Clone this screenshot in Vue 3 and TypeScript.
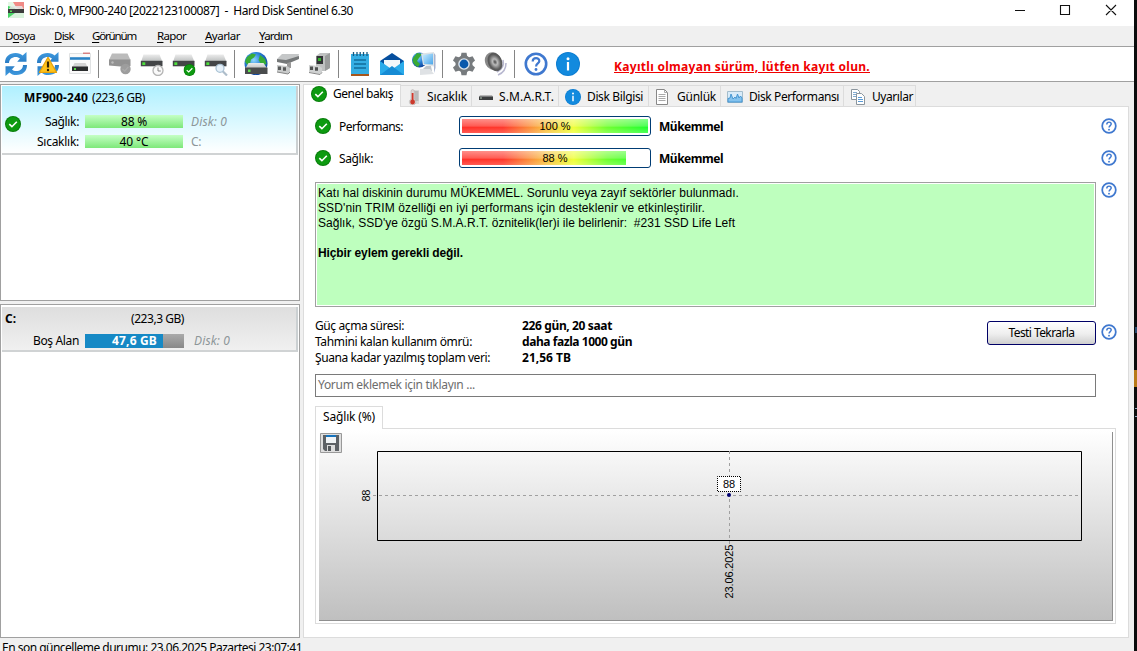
<script setup lang="ts">
import type { Directive } from 'vue'

// Tracks a label so that it occupies the given width in pixels.
const vFit: Directive<HTMLElement, number> = {
  mounted(el, binding) {
    const count = (el.textContent ?? '').length
    const natural = el.getBoundingClientRect().width
    el.style.letterSpacing = `${(binding.value - natural) / count}px`
  },
}

interface Menu { key: string; pre: string; rest: string; left: number; width: number }
const menus: Menu[] = [
  { pre: 'D', key: 'o', rest: 'sya', left: 5, width: 30 },
  { pre: '', key: 'D', rest: 'isk', left: 54, width: 20 },
  { pre: '', key: 'G', rest: 'örünüm', left: 92, width: 44 },
  { pre: '', key: 'R', rest: 'apor', left: 157, width: 29 },
  { pre: '', key: 'A', rest: 'yarlar', left: 205, width: 35 },
  { pre: '', key: 'Y', rest: 'ardım', left: 259, width: 33 },
]

const toolbar: string[] = [
  'refresh', 'refresh-warn', 'window', '|', 'disk-off', 'disk-clock', 'disk-ok', 'disk-search', '|',
  'disk-globe', 'plug', 'plug-disk', '|', 'notes', 'mail', 'network', '|', 'gear', 'speaker', '|', 'help', 'info',
]

interface Tab { label: string; icon: string; box: number; pad: number; gap: number; width: number }
const tabs: Tab[] = [
  { label: 'Genel bakış', icon: 'check', box: 98, pad: 7, gap: 6, width: 60 },
  { label: 'Sıcaklık', icon: 'thermo', box: 71, pad: 4, gap: 6, width: 40 },
  { label: 'S.M.A.R.T.', icon: 'drive', box: 87, pad: 6, gap: 5, width: 55 },
  { label: 'Disk Bilgisi', icon: 'info', box: 90, pad: 6, gap: 6, width: 56 },
  { label: 'Günlük', icon: 'page', box: 72, pad: 6, gap: 6, width: 39 },
  { label: 'Disk Performansı', icon: 'wave', box: 123, pad: 6, gap: 6, width: 90 },
  { label: 'Uyarılar', icon: 'pages', box: 72, pad: 6, gap: 6, width: 41 },
]

const meters = [
  { label: 'Performans:', labelWidth: 64, value: 100 },
  { label: 'Sağlık:', labelWidth: 34, value: 88 },
]

const facts = [
  { label: 'Güç açma süresi:', lw: 89, value: '226 gün, 20 saat', vw: 90 },
  { label: 'Tahmini kalan kullanım ömrü:', lw: 157, value: 'daha fazla 1000 gün', vw: 110 },
  { label: 'Şuana kadar yazılmış toplam veri:', lw: 175, value: '21,56 TB', vw: 49 },
]
</script>

<template>
  <svg class="defs" width="0" height="0">
    <defs>
      <linearGradient id="blue" x1="0" y1="0" x2="0" y2="1"><stop offset="0" stop-color="#3f9be0" /><stop offset="1" stop-color="#2a7cc4" /></linearGradient>
      <linearGradient id="metal" x1="0" y1="0" x2="0" y2="1"><stop offset="0" stop-color="#ececec" /><stop offset="1" stop-color="#b9bcbc" /></linearGradient>
      <radialGradient id="globe" cx=".4" cy=".35" r=".7"><stop offset="0" stop-color="#8fd8ff" /><stop offset=".5" stop-color="#267fd4" /><stop offset="1" stop-color="#0c3c94" /></radialGradient>
      <linearGradient id="screen" x1="0" y1="0" x2="1" y2="1"><stop offset="0" stop-color="#cdeeff" /><stop offset="1" stop-color="#4aa6ea" /></linearGradient>
      <radialGradient id="cone"><stop offset="0" stop-color="#4a4a4a" /><stop offset=".35" stop-color="#bbb" /><stop offset=".8" stop-color="#666" /><stop offset="1" stop-color="#505050" /></radialGradient>
    </defs>
    <symbol id="i-check" viewBox="0 0 16 16"><circle cx="8" cy="8" r="8" fill="#087d0b" /><circle cx="8" cy="8" r="7" fill="#0d9a10" /><path d="M4.3 8.2l2.6 2.5 4.9-5" fill="none" stroke="#fff" stroke-width="1.6" /></symbol>
    <symbol id="i-info" viewBox="0 0 24 24"><circle cx="12" cy="12" r="12" fill="#0c7cd0" /><circle cx="12" cy="12" r="11" fill="#128ade" /><circle cx="12" cy="6.8" r="1.5" fill="#fff" /><path d="M12 10v8.500" stroke="#fff" stroke-width="2.2" /></symbol>
    <symbol id="i-help" viewBox="0 0 24 24"><circle cx="12" cy="12" r="10.2" fill="#fff" stroke="#3f78cf" stroke-width="2.600" /><path d="M8.7 9.6c0-4.6 6.8-4.3 6.6-.5-.1 2.4-3.2 2.4-3.2 5.3" fill="none" stroke="#3f78cf" stroke-width="2.2" /><circle cx="12" cy="17.5" r="1.4" fill="#3f78cf" /></symbol>
    <symbol id="i-refresh" viewBox="0 0 24 24"><g id="arrow"><path d="M1 11C1 4.700 5.200 1 11.600 1c3.200 0 5.300 1 7 2.600L22.500 0v9.800h-9.300L16 6.500C14.900 5.400 13.500 4.900 11.700 4.900 8 4.900 5.200 7 5 11z" fill="url(#blue)" /></g><use href="#arrow" transform="rotate(180 12 12)" /></symbol>
    <symbol id="i-refresh-warn" viewBox="0 0 24 24"><use href="#i-refresh" width="24" height="24" /><path d="M12 5.300L20.500 20.400h-17z" fill="#ffc31c" stroke="#e5a20b" stroke-width="1.200" stroke-linejoin="round" /><path d="M12 9.500v6" stroke="#332504" stroke-width="2.200" /><circle cx="12" cy="18" r="1.200" fill="#332504" /></symbol>
    <symbol id="i-window" viewBox="0 0 24 24"><path d="M1.500 1.500h21v20h-21z" fill="#fafafa" stroke="#e0e2e3" /><path d="M15 1.200h7" stroke="#d36a6a" stroke-width="1.200" /><path d="M2 6.500h20" stroke="#2b83c6" stroke-width="2.600" /><path d="M6.500 11h11l2 4h-15z" fill="#d4d4d4" /><path d="M4 14.500h16v4.500H4z" fill="#2b2d2e" /><path d="M6 16h2v2H6z" fill="#55d84a" /></symbol>
    <symbol id="disk" viewBox="0 0 24 24"><path d="M3.500 2.500h16L22.500 10H1z" fill="url(#metal)" /><path d="M.8 8.800h21.700v5.500H.8z" fill="#434547" /><path d="M2.300 10.300h3v2.700h-3z" fill="#4ddf3c" /></symbol>
    <symbol id="i-disk-off" viewBox="0 0 24 24"><path d="M4 1.500h15.500L22.500 8H1z" fill="#bbb" /><path d="M1 7.500h21.500V14L18 15 1 13.500z" fill="#929292" /><circle cx="17.500" cy="17" r="5.200" fill="#9d9d9d" /><circle cx="4.500" cy="10.500" r="1.200" fill="#bbb" /><path d="M14.500 17l2.300 2 3.500-4" fill="none" stroke="#aaa" stroke-width="1.300" /></symbol>
    <symbol id="i-disk-clock" viewBox="0 0 24 24"><use href="#disk" width="24" height="24" /><circle cx="18" cy="18.500" r="5" fill="#fafafa" stroke="#b4b4b4" stroke-width="1.300" /><path d="M18 15.500v3.500h2.800" fill="none" stroke="#888" /></symbol>
    <symbol id="i-disk-ok" viewBox="0 0 24 24"><use href="#disk" width="24" height="24" /><use href="#i-check" x="11.500" y="12" width="12" height="12" /></symbol>
    <symbol id="i-disk-search" viewBox="0 0 24 24"><use href="#disk" width="24" height="24" /><path d="M18 18.500l5 5" stroke="#aebdca" stroke-width="2.200" /><circle cx="16" cy="16.300" r="4" fill="#e6f1fa" stroke="#aac2d4" stroke-width="1.300" /></symbol>
    <symbol id="i-disk-globe" viewBox="0 0 24 24"><circle cx="12" cy="11.500" r="11.500" fill="url(#globe)" /><path d="M3 5l5-3.500 4 1-2 3-3 2-1 4-3 1-2-3zm13-2l5 4 1.500 5-3 1-3-2-2-3z" fill="#39ad36" /><path d="M4.500 11h15l4 6H1z" fill="url(#metal)" /><path d="M1 15.500h22.500V22H1z" fill="#4a4c4d" /><path d="M4 17.500h2.500v2.500H4z" fill="#61e050" /></symbol>
    <symbol id="i-plug" viewBox="0 0 24 24"><path d="M1 7l5-5h17l-1 5-12 4z" fill="#c5c7c8" /><path d="M1 7l9 1 13-4v3l-12 5-10-2z" fill="#757879" /><path d="M11 11l4-1v6h-4z" fill="#999" /><path d="M1 13l10 1 3 2v5l-3 1-10-2z" fill="#c8caca" /><path d="M2 14.500h3v3.500H2zm5 .7h3v3.500H7z" fill="#585a5a" /><path d="M1 20l11 2 2-2" fill="none" stroke="#888" /></symbol>
    <symbol id="i-plug-disk" viewBox="0 0 24 24"><path d="M8 4l4-3h10v15l-5 3H8z" fill="#bfc1c1" /><path d="M17 4l5-3v15l-5 3z" fill="#9a9c9c" /><path d="M8.500 4H15v8H8.500z" fill="#323536" /><path d="M10 6h3v3h-3z" fill="#35b32e" /><path d="M1 13l10 1 3 2v5l-3 1-10-2z" fill="#cfd1d1" /><path d="M2 14.500h3v3.500H2zm5 .7h3v3.500H7z" fill="#505252" /><path d="M1 20.500l11 2 2-2" fill="none" stroke="#888" /></symbol>
    <symbol id="i-notes" viewBox="0 0 24 24"><path d="M3 2h18v20H3z" fill="#35aee4" /><path d="M3 22h18v2H3z" fill="#a7561c" /><path d="M5.500 0v4M9 0v4m3.200-4v4M15.500 0v4M19 0v4" stroke="#17597f" stroke-width="1.300" /><path d="M6 8h12M6 12h12M6 16h12" stroke="#126d9c" stroke-width="1.600" /></symbol>
    <symbol id="i-mail" viewBox="0 0 24 24"><path d="M0 9L12 1l12 8v5H0z" fill="#064f9e" /><path d="M4 8h16v10H4z" fill="#f3f7fa" /><path d="M0 9l12 8.500L24 9v14H0z" fill="#2aabea" /><path d="M0 23l12-9 12 9z" fill="#168bd4" /></symbol>
    <symbol id="i-network" viewBox="0 0 24 24"><circle cx="7.500" cy="8" r="7.500" fill="url(#globe)" /><path d="M1 6l4-5 5 1-3 4-2 3 3 3-2 3C2 13 0 10 1 6z" fill="#3aaa34" /><path d="M9 1.500L22 0v14.500L11 13z" fill="#dfe3e6" /><path d="M10.500 3L21 1.500v11L12 12z" fill="url(#screen)" /><path d="M14 14h5l1 5H9z" fill="#bfc5cb" /><path d="M8 17h10l4 5-14 1z" fill="#dfe2e5" /><path d="M22 1l1.500 2v13L22 21z" fill="#a8b4d0" /></symbol>
    <symbol id="i-gear" viewBox="0 0 24 24"><circle cx="12" cy="12" r="8.500" fill="#777b7e" /><g fill="#777b7e"><path id="tooth" d="M9.500 0.700h5l1 5H8.500z" /><use href="#tooth" transform="rotate(60 12 12)" /><use href="#tooth" transform="rotate(120 12 12)" /><use href="#tooth" transform="rotate(180 12 12)" /><use href="#tooth" transform="rotate(240 12 12)" /><use href="#tooth" transform="rotate(300 12 12)" /></g><circle cx="12" cy="12" r="5.800" fill="#dbe4ed" /><circle cx="12" cy="12" r="4.400" fill="#0a59ac" /></symbol>
    <symbol id="i-speaker" viewBox="0 0 24 24"><path d="M19 8q2 8-6 12m9-9q0 9-8 12" fill="none" stroke="#b8b8d0" stroke-width="1.600" /><ellipse cx="9" cy="9" rx="8" ry="9" transform="rotate(-25 9 9)" fill="#888" /><ellipse cx="11" cy="10" rx="6.500" ry="9" transform="rotate(-25 11 10)" fill="url(#cone)" stroke="#5a5a5a" /></symbol>
    <symbol id="i-thermo" viewBox="0 0 16 16"><path d="M9 1h5v14H9z" fill="#dadada" /><path d="M9.500 3h4m-4 2h4m-4 2h4m-4 2h4m-4 2h4" stroke="#8c8c8c" stroke-width=".8" /><path d="M6 1.500q1.700-2 3.300 0V10a3.300 3.300 0 1 1-3.300 0z" fill="#dfd5d3" stroke="#aaa" stroke-width=".5" /><path d="M7.600 4v9" stroke="#d2362a" stroke-width="1.800" /><circle cx="7.600" cy="13" r="2.400" fill="#cb392c" /></symbol>
    <symbol id="i-drive" viewBox="0 0 16 16"><path d="M2 6h12l1 2H1z" fill="#b7b7b7" /><path d="M1 7.500h14V11H1z" fill="#3b3d3e" /><path d="M2 9h2" stroke="#b6c8b4" /></symbol>
    <symbol id="i-page" viewBox="0 0 16 16"><path d="M1.500.5h8l3 3v12h-11z" fill="#fff" stroke="#888" /><path d="M9.500.5v3h3M3.500 5.500h7m-7 2h7m-7 2h7m-7 2h7" fill="none" stroke="#aaa" /></symbol>
    <symbol id="i-wave" viewBox="0 0 16 16"><path d="M.5 2.500h15v11H.5z" fill="#d9ecfa" stroke="#a4bdcc" /><path d="M1 13V9.500l2-.5 1-4 2 5 2-2 1 1.500 1.500-4.500 1.500 4 1.500-2 1.500 2v4z" fill="#85c3ee" stroke="#3e91cf" stroke-width=".9" /></symbol>
    <symbol id="i-pages" viewBox="0 0 16 16"><path d="M1.500.500h6l2 2v8h-8z" fill="#fff" stroke="#8b959d" /><path d="M3 3.500h4m-4 2h4m-4 2h4" stroke="#83add2" /><path d="M6.500 4.500h5l3 3v8h-8z" fill="#fff" stroke="#8b959d" /><path d="M8 8.500h4m-4 2h5m-5 2h5" stroke="#5b9bd6" /></symbol>
  </svg>

  <div class="desktop">
    <div class="window">
      <header class="title">
        <svg class="logo" viewBox="0 0 16 16"><path d="M0 0h8L16 3v13H0z" fill="#e4f6e5" /><path d="M0 4l7 2v5L0 15z" fill="#42d663" /><path d="M5 0h11v10L8 5z" fill="#f08a86" /><path d="M3 4h11l2 4H0z" fill="#e4e4e4" opacity=".85" /><path d="M0 7h16v4H0z" fill="#3c3c3c" /><path d="M2 8.500h2V10H2z" fill="#5dde58" /><path d="M0 11h16v5H0z" fill="#d9f3dc" /><path d="M0 11h7L0 16z" fill="#48d566" /></svg>
        <span v-fit="324" class="caption">Disk: 0, MF900-240 [2022123100087]&nbsp; -&nbsp; Hard Disk Sentinel 6.30</span>
        <svg class="controls" viewBox="0 0 108 14"><path d="M0 6.500h10M45.500 1.500h9v9h-9zM91 1l10 10M101 1L91 11" fill="none" stroke="#111" stroke-width="1.100" /></svg>
      </header>

      <nav class="menubar">
        <span v-for="m in menus" :key="m.left" class="menu" :style="{ marginLeft: m.left + 'px' }"><span v-fit="m.width">{{ m.pre }}<u>{{ m.key }}</u>{{ m.rest }}</span></span>
      </nav>

      <div class="toolbar">
        <template v-for="(name, i) in toolbar" :key="i">
          <i v-if="name === '|'" class="sep" />
          <svg v-else class="tool"><use :href="'#i-' + name" /></svg>
        </template>
        <a class="register"><span v-fit="256">Kayıtlı olmayan sürüm, lütfen kayıt olun.</span></a>
      </div>

      <main class="body">
        <aside class="side">
          <section class="list disks">
            <div class="entry selected">
              <svg class="state"><use href="#i-check" /></svg>
              <div class="entry-head"><b v-fit="64">MF900-240</b><span v-fit="53">(223,6 GB)</span></div>
              <div class="entry-row"><span class="name"><span v-fit="34">Sağlık:</span></span><div class="gauge"><span v-fit="26">88 %</span></div><em v-fit="36">Disk: 0</em></div>
              <div class="entry-row"><span class="name"><span v-fit="42">Sıcaklık:</span></span><div class="gauge"><span v-fit="29">40 °C</span></div><span v-fit="10" class="muted">C:</span></div>
            </div>
          </section>
          <section class="list volumes">
            <div class="entry volume">
              <div class="volume-head"><b v-fit="11">C:</b><span v-fit="53">(223,3 GB)</span></div>
              <div class="entry-row"><span class="name"><span v-fit="46">Boş Alan</span></span><div class="space"><b v-fit="45">47,6 GB</b></div><em v-fit="36">Disk: 0</em></div>
            </div>
          </section>
        </aside>

        <section class="content">
          <div class="tabs">
            <div v-for="(t, i) in tabs" :key="t.label" class="tab" :class="{ active: i === 0 }" :style="{ width: t.box + 'px', paddingLeft: t.pad + 'px', gap: t.gap + 'px' }">
              <svg><use :href="'#i-' + t.icon" /></svg><span v-fit="t.width">{{ t.label }}</span>
            </div>
          </div>

          <div class="page">
            <div v-for="m in meters" :key="m.label" class="meter-row">
              <svg class="ok"><use href="#i-check" /></svg>
              <span class="meter-label"><span v-fit="m.labelWidth">{{ m.label }}</span></span>
              <div class="meter"><div class="clip" :style="{ width: m.value + '%' }"><div class="spectrum" /></div><span class="pct">{{ m.value }} %</span></div>
              <b v-fit="64" class="verdict">Mükemmel</b>
              <svg class="ask"><use href="#i-help" /></svg>
            </div>

            <div class="report-row">
              <div class="report">
                <p><span v-fit="421">Katı hal diskinin durumu MÜKEMMEL. Sorunlu veya zayıf sektörler bulunmadı.</span></p>
                <p><span v-fit="387">SSD'nin TRIM özelliği en iyi performans için desteklenir ve etkinleştirilir.</span></p>
                <p><span v-fit="417">Sağlık, SSD'ye özgü S.M.A.R.T. öznitelik(ler)i ile belirlenir:&nbsp; #231 SSD Life Left</span></p>
                <p class="action"><b v-fit="145">Hiçbir eylem gerekli değil.</b></p>
              </div>
              <svg class="ask"><use href="#i-help" /></svg>
            </div>

            <div class="facts-row">
              <dl class="facts">
                <template v-for="f in facts" :key="f.label"><dt><span v-fit="f.lw">{{ f.label }}</span></dt><dd><b v-fit="f.vw">{{ f.value }}</b></dd></template>
              </dl>
              <button class="retest"><span v-fit="66">Testi Tekrarla</span></button>
              <svg class="ask"><use href="#i-help" /></svg>
            </div>

            <div class="comment"><span v-fit="157">Yorum eklemek için tıklayın ...</span></div>

            <div class="subtab"><span v-fit="52">Sağlık (%)</span></div>
            <div class="chart-page">
              <svg class="chart" viewBox="319 430 794 191">
                <defs><linearGradient id="bg" x1="0" y1="0" x2="0" y2="1"><stop offset="0" stop-color="#fff" /><stop offset="1" stop-color="#bfbfbf" /></linearGradient></defs>
                <path d="M319 430h794v191H319z" fill="url(#bg)" />
                <path d="M1112.500 432v189M319 620.500h794" stroke="#8f8f8f" />
                <path d="M320.500 433.500h21v19h-21z" fill="#dedede" stroke="#999" />
                <path d="M323 435h16v16h-14l-2-2z" fill="#5d6165" /><path d="M326 435h10v8h-10z" fill="#f0f3f5" /><path d="M326 435h10v2h-10z" fill="#1673bd" /><path d="M327 445h8v6h-8z" fill="#ddd" /><path d="M328 446h3v5h-3z" fill="#55595c" />
                <path d="M377.500 451.500h704v89h-704z" fill="none" stroke="#000" />
                <path d="M373 495.500h708M729.500 451v93" stroke="#a0a0a0" stroke-dasharray="3 3" />
                <path d="M717.500 476.500h23v15h-23z" fill="#fff" stroke="#000" stroke-dasharray="1 1" stroke-dashoffset=".5" />
                <circle cx="729" cy="495" r="2" fill="#000070" />
                <g class="axis"><text x="723" y="488" textLength="12">88</text><text transform="translate(370 501.500) rotate(-90)" textLength="12">88</text><text transform="translate(733 598.500) rotate(-90)" textLength="54">23.06.2025</text></g>
              </svg>
            </div>
          </div>
        </section>
      </main>
      <footer class="status"><span v-fit="300">En son güncelleme durumu: 23.06.2025 Pazartesi 23:07:41</span></footer>
    </div>
    <div class="backdrop"><i class="mark" /><i class="badge" /><i class="glyph" /></div>
  </div>
</template>

<style>
body { margin: 0; overflow: hidden; }
</style>

<style scoped>
.defs { position: absolute; }
.desktop { width: 1137px; height: 651px; display: flex; overflow: hidden; background: #090b0b; font: 12px/16px "Noto Sans", "Open Sans", sans-serif; color: #000; white-space: nowrap; }
.window { width: 1134px; height: 651px; flex: none; background: #f0f0f0; display: flex; flex-direction: column; overflow: hidden; }
.window span, .window b, .window em { display: inline-block; }
.title { height: 26px; flex: none; background: #fff; display: flex; align-items: flex-start; }
.logo { width: 16px; height: 16px; margin: 2px 5px 0 8px; }
.caption { margin-top: 3px; }
.controls { width: 108px; height: 14px; margin: 4px 11px 0 auto; }
.menubar { height: 20px; flex: none; display: grid; align-items: center; border-bottom: 1px solid #a0a0a0; }
.menu { grid-area: 1 / 1; font-size: 11.500px; }
.menu u { text-underline-offset: 2px; }
.toolbar { height: 35px; flex: none; box-sizing: border-box; background: #fff; border-bottom: 1px solid #a0a0a0; display: flex; align-items: center; padding-left: 4px; }
.tool { width: 24px; height: 24px; margin-right: 8px; }
.sep { width: 1px; height: 28px; margin: 0 9px 0 -2px; background: #858585; }
.register { margin: 6px 0 0 26px; color: #f00000; font-weight: 700; }
.register span { text-decoration: underline; }
.body { height: 555px; flex: none; box-sizing: border-box; padding-top: 2px; display: flex; gap: 3px; }
.side { width: 300px; height: 554px; display: flex; flex-direction: column; gap: 3px; }
.list { box-sizing: border-box; border: 1px solid #a0a0a0; background: #fff; padding: 1px; }
.disks { height: 217px; }
.volumes { height: 334px; padding-top: 2px; }
.entry { position: relative; box-sizing: border-box; border-right: 2px solid #cbd0d2; border-bottom: 2px solid #d0d3d4; }
.selected { height: 69px; background: linear-gradient(#aff0ff, #fff); }
.state { position: absolute; left: 3px; top: 30px; width: 16px; height: 16px; }
.entry-head { display: flex; gap: 4px; height: 20px; padding: 4px 0 2px 22px; }
.entry-row { height: 20px; display: flex; align-items: center; }
.name { width: 77px; text-align: right; margin-right: 6px; }
.gauge { width: 98px; height: 13px; line-height: 14px; text-align: center; background: linear-gradient(#c5ffc5, #7de87a); margin: -1px 8px 0 0; }
.entry-row em, .muted { color: #8d9699; }
.volume { height: 45px; background: linear-gradient(#dedede, #f0f0f0); padding-top: 3px; }
.volume-head { display: flex; height: 20px; padding: 1px 0 0 3px; }
.volume-head b { width: 11px; margin-right: 115px; }
.space { width: 99px; height: 14px; line-height: 14px; text-align: center; color: #fff; background: linear-gradient(90deg, #1689c5 78px, transparent 78px), linear-gradient(#aaa, #888); margin-right: 10px; }
.content { width: 826px; height: 553px; }
.tabs { height: 22px; display: flex; align-items: flex-end; }
.tab { height: 21px; box-sizing: border-box; flex: none; display: flex; align-items: center; border: 1px solid #dcdcdc; border-left: 0; border-bottom: 0; padding-top: 1px; }
.tab svg { width: 16px; height: 16px; flex: none; }
.tab.active { height: 23px; margin-bottom: -1px; background: #fff; border-left: 1px solid #dcdcdc; border-bottom: 0; z-index: 1; padding: 0 0 4px; }
.page { width: 826px; height: 532px; box-sizing: border-box; border: 1px solid #dcdcdc; background: #fff; padding: 3px 0 0 11px; }
.meter-row { height: 32px; display: flex; align-items: center; }
.ok { width: 16px; height: 16px; margin-right: 8px; }
.meter-label { width: 120px; margin-top: 2px; }
.meter { position: relative; width: 192px; height: 20px; box-sizing: border-box; border: 1px solid #003c74; border-radius: 3px; padding: 2px; }
.clip { height: 14px; overflow: hidden; }
.spectrum { width: 186px; height: 14px; background: linear-gradient(rgba(255,255,255,.45), rgba(255,255,255,.2) 50%, rgba(255,255,255,0) 60%, rgba(255,255,255,.2)), linear-gradient(90deg, #ff3028 0, #ff382c 22%, #f8c040 45%, #efff38 60%, #70ff30 78%, #20ff30); }
.pct { position: absolute; inset: 0; text-align: center; font: 11px/19px "Liberation Sans", Arial, sans-serif; }
.verdict { margin: 2px 0 0 8px; }
.ask { width: 16px; height: 16px; flex: none; }
.meter-row .ask { margin: 0 11px 0 auto; }
.report-row { display: flex; align-items: flex-start; gap: 5px; padding-top: 8px; }
.report { width: 781px; height: 125px; box-sizing: border-box; border: 1px solid #a0a0a0; outline: 1px solid #fff; outline-offset: -2px; background: #beffbe; padding: 3px 2px; font: 12px/15px "Liberation Sans", Arial, sans-serif; }
.report p { height: 15px; margin: 0; }
.report .action { margin-top: 15px; }
.facts-row { height: 67px; box-sizing: border-box; padding-top: 11px; display: flex; align-items: flex-start; }
.facts { width: 672px; margin: 0; display: grid; grid-template-columns: 207px 1fr; grid-auto-rows: 16px; }
.facts dd { margin: 0; }
.retest { width: 109px; height: 24px; margin: 3px 5px 0 0; padding: 0; border: 1px solid #000066; border-radius: 3px; background: linear-gradient(#fff, #eee 55%, #cfcfcf); font: inherit; line-height: 20px; }
.facts-row .ask { margin-top: 6px; }
.comment { width: 781px; height: 23px; box-sizing: border-box; border: 1px solid #7a7a7a; line-height: 20px; padding-left: 2px; color: #6d6d6d; }
.subtab { position: relative; z-index: 1; width: 68px; height: 23px; box-sizing: border-box; margin: 9px 0 -1px; padding-left: 7px; border: 1px solid #dcdcdc; border-bottom: 0; background: #fff; line-height: 20px; }
.chart-page { width: 801px; height: 196px; box-sizing: border-box; border: 1px solid #dcdcdc; padding: 1px 3px; }
.chart { display: block; width: 794px; height: 191px; }
.axis { font: 11px "Liberation Sans", Arial, sans-serif; }
.status { height: 14px; flex: none; padding: 3px 0 0 2px; }
.backdrop { width: 3px; height: 651px; background: #0a0c0c; display: flex; flex-direction: column; }
.mark { height: 6px; margin: 327px 0 37px 1px; background: #274b70; }
.badge { height: 17px; background: #b87918; }
.glyph { height: 7px; margin: 21px 0 0 1px; border-top: 1px solid #8ba5bf; border-bottom: 1px solid #8ba5bf; }
</style>
